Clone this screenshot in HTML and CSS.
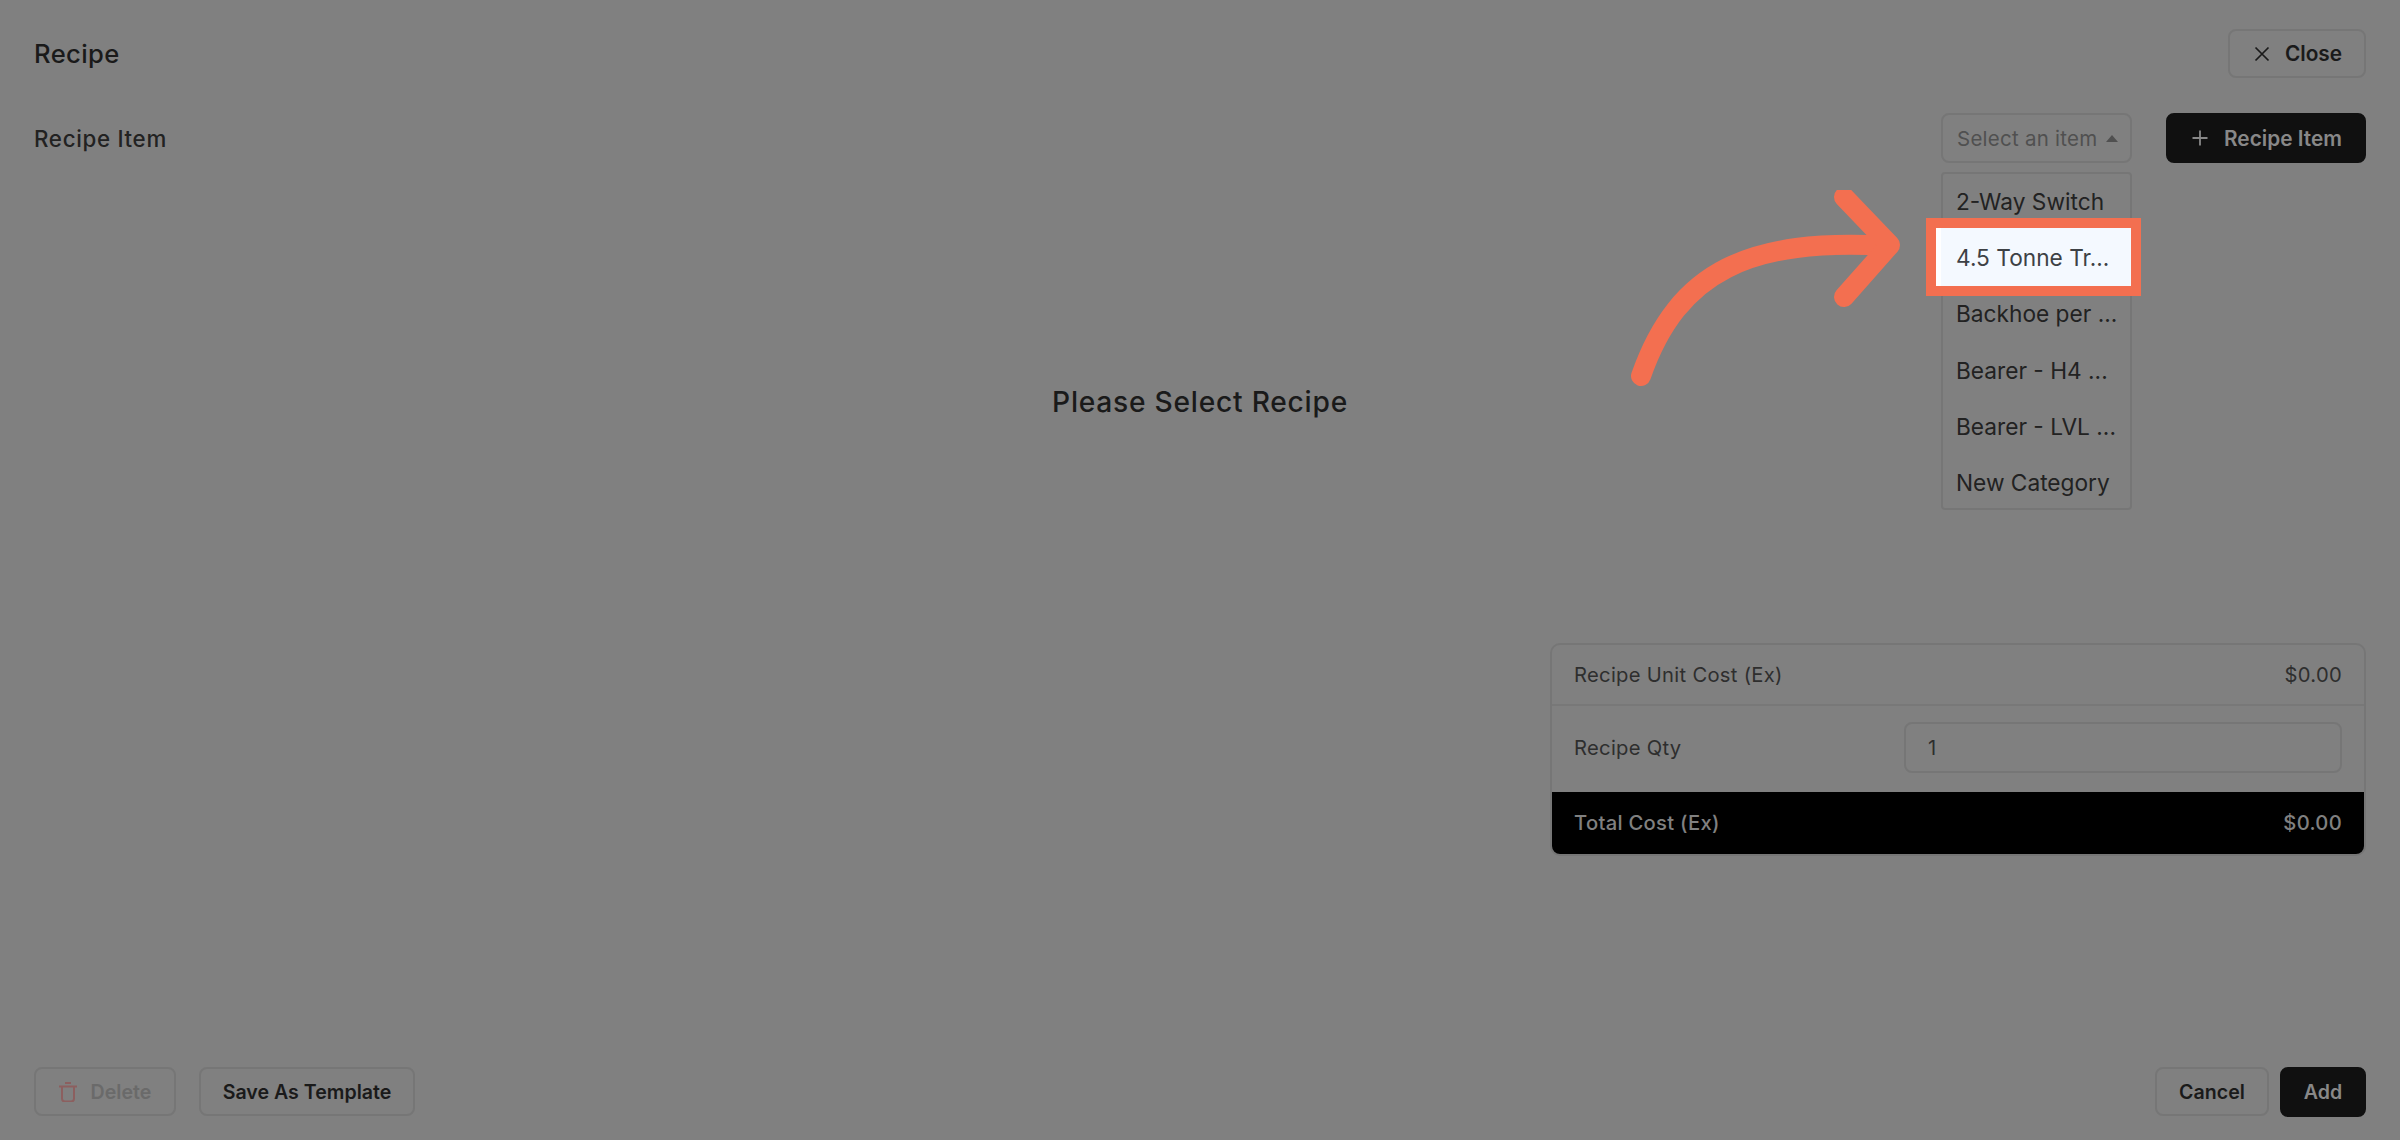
FILE: index.html
```html
<!DOCTYPE html>
<html lang="en">
<head>
<meta charset="UTF-8" />
<meta name="viewport" content="width=device-width, initial-scale=1" />
<title>Recipe</title>
<link rel="stylesheet" href="styles.css">
</head>
<body>
  <div class="modal">
    <div class="top-bar">
      <h3 class="title">Recipe</h3>
      <button class="btn btn-close">
        <svg width="20" height="20" viewBox="0 0 20 20" fill="none" stroke="#1a1a1a" stroke-width="1.7"><path d="M3.5 3.5l13 13M16.5 3.5l-13 13" /></svg>
        Close
      </button>
    </div>

    <div class="item-bar">
      <span class="item-label">Recipe Item</span>
      <div class="item-tools">
        <div class="picker">
          <div class="select">Select an item <span class="caret"></span></div>
          <ul class="dropdown">
            <li>2-Way Switch</li>
            <li class="active"><span>4.5 Tonne Tr...</span></li>
            <li>Backhoe per ...</li>
            <li>Bearer - H4 ...</li>
            <li>Bearer - LVL ...</li>
            <li>New Category</li>
          </ul>
        </div>
        <button class="btn btn-dark btn-add-item">
          <svg width="20" height="20" viewBox="0 0 20 20" fill="none" stroke="#888888" stroke-width="1.8"><path d="M10 2.5v15M2.5 10h15" /></svg>
          Recipe Item
        </button>
      </div>
    </div>

    <div class="empty">Please Select Recipe</div>

    <div class="summary-wrap">
      <div class="summary">
        <div class="row row-unit">
          <span>Recipe Unit Cost (Ex)</span>
          <span>$0.00</span>
        </div>
        <div class="row row-qty">
          <span>Recipe Qty</span>
          <div class="qty-input">1</div>
        </div>
        <div class="row row-total">
          <span>Total Cost (Ex)</span>
          <span>$0.00</span>
        </div>
      </div>
    </div>

    <div class="footer">
      <div class="footer-group">
        <button class="btn btn-delete">
          <svg width="18" height="20" viewBox="0 0 18 20" fill="none" stroke="#8c5f5f" stroke-width="2"><path d="M0 4.5h18M6 1h6M3 4.5v12a3 3 0 0 0 3 3h6a3 3 0 0 0 3-3v-12" /></svg>
          Delete
        </button>
        <button class="btn btn-template">Save As Template</button>
      </div>
      <div class="footer-group footer-right">
        <button class="btn btn-cancel">Cancel</button>
        <button class="btn btn-dark btn-submit">Add</button>
      </div>
    </div>
  </div>

  <!-- annotation arrow -->
  <svg class="arrow" width="300" height="220" viewBox="0 0 300 220" fill="none" stroke="#f36f50" stroke-width="20" stroke-linecap="round" stroke-linejoin="round">
    <path d="M21 186C58 80 130 48 268 56" />
    <path d="M224 7L270 55 224 107" />
  </svg>
</body>
</html>
```

FILE: styles.css
```css
* {
    box-sizing: border-box;
}
body {
    font-family: Inter, "Liberation Sans", sans-serif;
    margin: 0;
    background-color: #808080;
    color: #1a1a1a;
    height: 100vh;
    overflow: hidden;
    position: relative;
}
.modal {
    height: 100%;
    display: flex;
    flex-direction: column;
    padding: 29px 34px 23px;
}
.top-bar {
    display: flex;
    justify-content: space-between;
    align-items: center;
    height: 49px;
}
.title {
    margin: 0;
    font-size: 25.6px;
    font-weight: 500;
    letter-spacing: 0.4px;
}
.item-bar {
    display: flex;
    justify-content: space-between;
    align-items: flex-start;
    margin-top: 35px;
    height: 50px;
}
.item-label {
    font-size: 22.3px;
    font-weight: 450;
    line-height: 52px;
    color: #222222;
    letter-spacing: 0.7px;
}
.item-tools {
    display: flex;
    gap: 34px;
}
.btn {
    display: flex;
    align-items: center;
    justify-content: center;
    height: 49px;
    padding: 0;
    font-family: inherit;
    font-size: 19.6px;
    font-weight: 600;
    color: #1a1a1a;
    background: transparent;
    border: 2px solid #767676;
    border-radius: 8px;
}
.btn-dark {
    background-color: #101010;
    border-color: #101010;
    color: #888888;
    height: 50px;
}
.btn-close {
    width: 138px;
    gap: 13px;
    font-size: 20.8px;
}
.btn-add-item {
    width: 200px;
    gap: 14px;
    font-size: 20.8px;
}
.picker {
    position: relative;
    width: 191px;
}
.select {
    display: flex;
    align-items: center;
    gap: 9px;
    height: 50px;
    padding: 0 14px;
    font-size: 20.5px;
    letter-spacing: 0.25px;
    white-space: nowrap;
    color: #505050;
    border: 2px solid #767676;
    border-radius: 8px;
}
.caret {
    width: 0;
    height: 0;
    border-left: 6px solid transparent;
    border-right: 6px solid transparent;
    border-bottom: 7px solid #505050;
}
/* open menu hangs under the select */
.dropdown {
    list-style: none;
    position: absolute;
    left: 0;
    right: 0;
    top: 59px;
    height: 338px;
    margin: 0;
    padding: 0;
    border: 2px solid #767676;
    border-radius: 4px;
    font-size: 22.7px;
    color: #222222;
    z-index: 1;
}
.dropdown li {
    height: 56.2px;
    line-height: 56px;
    padding-left: 13px;
    white-space: nowrap;
}
.dropdown li.active {
    position: relative;
    color: #3d4145;
}
.dropdown li.active span {
    position: relative;
}
.dropdown li.active::before {
    content: "";
    box-sizing: border-box;
    position: absolute;
    left: -17px;
    right: -11px;
    top: -12px;
    height: 78px;
    background: linear-gradient(to right, #ffffff 5px, #f4f9ff 5px);
    border: 10px solid #f36f50;
}
.empty {
    height: 480px;
    padding-top: 222px;
    text-align: center;
    font-size: 28.2px;
    font-weight: 450;
    letter-spacing: 0.75px;
}
.summary-wrap {
    display: flex;
    justify-content: flex-end;
}
.summary {
    width: 816px;
    height: 213px;
    border: 2px solid #767676;
    border-radius: 10px;
    overflow: hidden;
    font-size: 20.2px;
    letter-spacing: 0.3px;
    color: #2e2e2e;
    display: flex;
    flex-direction: column;
}
.row {
    display: flex;
    justify-content: space-between;
    align-items: center;
    padding: 0 22px;
}
.row-unit {
    height: 61px;
    padding-bottom: 1px;
    border-bottom: 2px solid #787878;
}
.row-qty {
    height: 86px;
    padding-bottom: 3px;
}
.qty-input {
    display: flex;
    align-items: center;
    width: 438px;
    height: 51px;
    padding-left: 22px;
    border: 2px solid #767676;
    border-radius: 8px;
}
.row-total {
    flex: 1;
    padding-bottom: 2px;
    background-color: #000000;
    color: #808080;
    font-weight: 500;
}
.footer {
    display: flex;
    justify-content: space-between;
    margin-top: auto;
}
.footer-group {
    display: flex;
    gap: 23px;
}
.footer-right {
    gap: 11px;
}
.btn-delete {
    width: 142px;
    gap: 14px;
    color: #6a6a6a;
}
.btn-template {
    width: 216px;
}
.btn-cancel {
    width: 114px;
}
.btn-submit {
    width: 86px;
}
/* annotation */
.arrow {
    position: absolute;
    left: 1620px;
    top: 190px;
    z-index: 2;
}
```
